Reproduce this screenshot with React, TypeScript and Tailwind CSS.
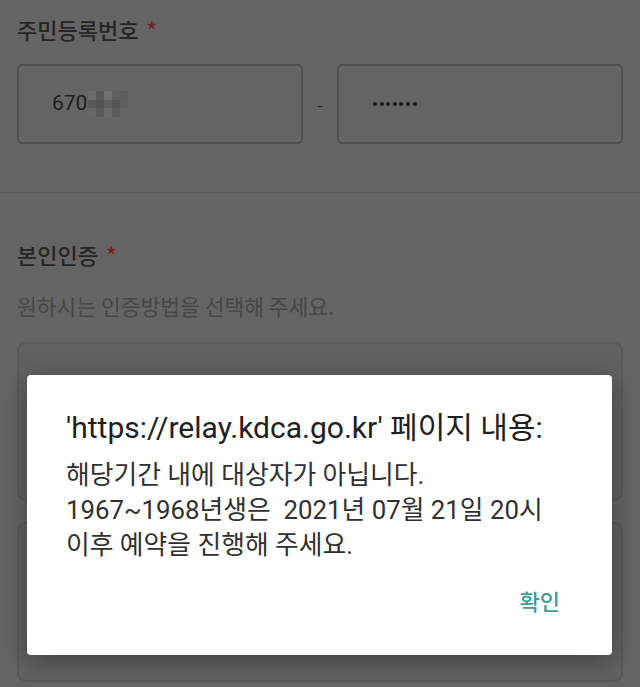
import React from 'react';

const FONT_PAGE = { fontFamily: '"Noto Sans CJK KR", "Noto Sans", sans-serif' };
const FONT_DIALOG = { fontFamily: 'Roboto, "Noto Sans CJK KR", sans-serif' };

// pixelated blur over the hidden digits
const MOSAIC = [
  ['#6c6c6c', '#5a5a5a', '#707070', '#606060', '#5d5d5d'],
  ['#585858', '#535353', '#5e5e5e', '#555555', '#5f5f5f'],
  ['#686868', '#595959', '#6b6b6b', '#5b5b5b', '#656565'],
];

const Mosaic: React.FC = () => (
  <div className="flex flex-col ml-[1px]">
    {MOSAIC.map((row, i) => (
      <div key={i} className="flex">
        {row.map((c, j) => (
          <div key={j} className="w-[8px] h-[8.5px]" style={{ background: c }} />
        ))}
      </div>
    ))}
  </div>
);

const Label: React.FC<{ text: string }> = ({ text }) => (
  <div className="flex items-center gap-[8px] text-[22px] font-medium text-[#262626] leading-none">
    <span>{text}</span>
    <span className="text-[#7a1f1f] text-[22px]">*</span>
  </div>
);

const App: React.FC = () => {
  return (
    <div className="relative w-[640px] h-[687px] overflow-hidden bg-[#656565]" style={FONT_PAGE}>
      {/* page behind the alert (dimmed) */}
      <div className="px-[17px] pt-[18px] pb-[48px] border-b border-[#5b5b5b]">
        <Label text="주민등록번호" />
        <div className="flex items-center mt-[24px]">
          <div className="w-[286px] h-[80px] rounded-[5px] border-2 border-[#4f4f4f] flex items-center pl-[33px]">
            <span className="text-[21px] text-[#1e1e1e]" style={{ fontFamily: 'Roboto, sans-serif' }}>670</span>
            <Mosaic />
          </div>
          <div className="w-[34px] flex justify-center text-[#222] text-[16px]">-</div>
          <div className="w-[286px] h-[80px] rounded-[5px] border-2 border-[#4f4f4f] flex items-center pl-[34px]">
            <div className="flex gap-[2.6px]">
              {Array.from({ length: 7 }).map((_, i) => (
                <span key={i} className="w-[4px] h-[4px] rounded-full bg-[#1a1a1a]" />
              ))}
            </div>
          </div>
        </div>
      </div>

      <div className="px-[17px] pt-[50px]">
        <Label text="본인인증" />
        <div className="mt-[30px] text-[21.5px] text-[#474747] leading-none">원하시는 인증방법을 선택해 주세요.</div>
        <div className="mt-[25px] flex flex-col gap-[21px]">
          <div className="h-[159px] rounded-[9px] border-2 border-[#5a5a5a] bg-[#626262]" />
          <div className="h-[160px] rounded-[9px] border-2 border-[#5a5a5a] bg-[#626262]" />
        </div>
      </div>

      {/* alert dialog */}
      <div
        className="absolute left-[27px] top-[375px] w-[585px] h-[280px] bg-white rounded-[4px] shadow-[0_6px_28px_rgba(0,0,0,0.35)] pl-[39px] pr-[52px] pt-[35px]"
        style={FONT_DIALOG}
      >
        <div className="text-[30px] leading-[36px] text-[#202020]">'https://relay.kdca.go.kr' 페이지 내용:</div>
        <div className="mt-[12px] text-[25.8px] leading-[35px] text-[#303030] whitespace-pre">
          {'해당기간 내에 대상자가 아닙니다.\n1967~1968년생은  2021년 07월 21일 20시\n이후 예약을 진행해 주세요.'}
        </div>
        <div className="mt-[27px] flex justify-end">
          <button className="text-[22px] leading-[26px] font-medium text-[#3f9d91]">확인</button>
        </div>
      </div>
    </div>
  );
};

export default App;
